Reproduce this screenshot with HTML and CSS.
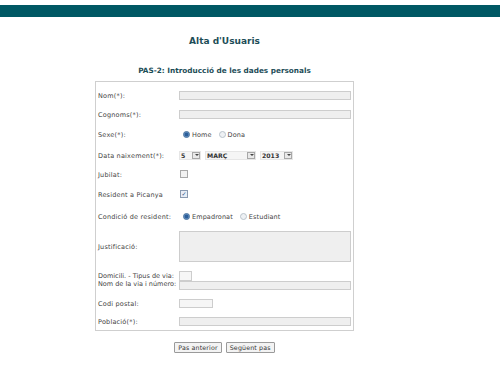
FILE: index.html
```html
<!DOCTYPE html>
<html lang="ca">
<head>
<meta charset="utf-8">
<title>Alta d'Usuaris</title>
<link rel="stylesheet" href="styles.css">
</head>
<body>
<div class="topbar"></div>
<div class="page">
  <h1 class="title">Alta d'Usuaris</h1>
  <h2 class="subtitle">PAS-2: Introducció de les dades personals</h2>
  <form class="box">
    <div class="row h18">
      <span class="label">Nom(*):</span>
      <span class="field"><span class="input full"></span></span>
    </div>
    <div class="row h20">
      <span class="label">Cognoms(*):</span>
      <span class="field"><span class="input full"></span></span>
    </div>
    <div class="row h20">
      <span class="label">Sexe(*):</span>
      <span class="field">
        <span class="radio checked"></span><span class="opt">Home</span>
        <span class="radio"></span><span class="opt">Dona</span>
      </span>
    </div>
    <div class="row h22">
      <span class="label">Data naixement(*):</span>
      <span class="field">
        <span class="select sel-day"><span class="sel-text">5</span><span class="arrow"></span></span>
        <span class="select sel-month"><span class="sel-text">MARÇ</span><span class="arrow"></span></span>
        <span class="select sel-year"><span class="sel-text">2013</span><span class="arrow"></span></span>
      </span>
    </div>
    <div class="row h16">
      <span class="label">Jubilat:</span>
      <span class="field"><span class="check"></span></span>
    </div>
    <div class="row h24">
      <span class="label">Resident a Picanya</span>
      <span class="field"><span class="check checked">✓</span></span>
    </div>
    <div class="row h20">
      <span class="label">Condició de resident:</span>
      <span class="field">
        <span class="radio checked"></span><span class="opt">Empadronat</span>
        <span class="radio"></span><span class="opt">Estudiant</span>
      </span>
    </div>
    <div class="row h40">
      <span class="label">Justificació:</span>
      <span class="field"><span class="input full textarea"></span></span>
    </div>
    <div class="row h28">
      <span class="label stacked"><span>Domicili. - Tipus de via:</span><span>Nom de la via i número:</span></span>
      <span class="field stack">
        <span class="input via"></span>
        <span class="input full"></span>
      </span>
    </div>
    <div class="row h18">
      <span class="label">Codi postal:</span>
      <span class="field"><span class="input cp"></span></span>
    </div>
    <div class="row h18">
      <span class="label">Població(*):</span>
      <span class="field"><span class="input full"></span></span>
    </div>
  </form>
  <div class="buttons">
    <button type="button" class="btn">Pas anterior</button>
    <button type="button" class="btn">Següent pas</button>
  </div>
</div>
</body>
</html>
```

FILE: styles.css
```css
html, body {
  margin: 0;
  padding: 0;
  background: #ffffff;
  font-family: "DejaVu Sans", Verdana, sans-serif;
}

.topbar {
  margin-top: 5px;
  height: 12px;
  background: #005864;
}

.page {
  width: 449px;
  display: flex;
  flex-direction: column;
  align-items: center;
}

.title {
  margin: 18px 0 0 0;
  font-size: 9px;
  line-height: 12px;
  font-weight: bold;
  color: #1d4d57;
}

.subtitle {
  margin: 19px 0 0 0;
  font-size: 7.3px;
  line-height: 10px;
  font-weight: bold;
  color: #1d4d57;
}

.box {
  margin: 5px 0 0 0;
  width: 259px;
  box-sizing: border-box;
  border: 1px solid #cfcfcf;
  padding: 4px 1px 0 2px;
  display: flex;
  flex-direction: column;
}

.row {
  display: flex;
  align-items: center;
}

.h16 { height: 16px; }
.h18 { height: 18px; }
.h20 { height: 20px; }
.h22 { height: 22px; }
.h24 { height: 24px; }
.h28 { height: 28px; }
.h40 { height: 40px; }

.label {
  width: 81px;
  flex: none;
  padding-top: 2px;
  font-size: 6.5px;
  line-height: 8px;
  letter-spacing: 0.2px;
  color: #444444;
  white-space: nowrap;
}

.label.stacked {
  display: flex;
  flex-direction: column;
  padding-top: 0;
  letter-spacing: 0;
}

.field {
  flex: 1;
  display: flex;
  align-items: center;
  font-size: 6.5px;
  color: #444444;
}

.field.stack {
  flex-direction: column;
  align-items: flex-start;
}

.input {
  display: block;
  box-sizing: border-box;
  height: 9px;
  background: #efefef;
  border: 1px solid #cdcdcd;
}

.input.full { width: 172px; }
.input.textarea { height: 31px; }
.input.via { width: 13px; height: 10px; background: #f6f6f6; }
.input.cp { width: 34px; height: 9px; background: #f6f6f6; }

.radio {
  width: 7px;
  height: 7px;
  box-sizing: border-box;
  border-radius: 50%;
  border: 1px solid #b9c3cc;
  background: #eef1f4;
  margin: 0 2px 0 4px;
  flex: none;
}

.radio.checked {
  border-color: #3d6a9a;
  background: radial-gradient(circle, #2c5f9a 0 1.6px, #6c95c4 2.3px, #c9d8ea 3.5px);
}

.opt {
  margin-right: 3px;
  line-height: 8px;
  padding-top: 1px;
  letter-spacing: 0.1px;
}

.select {
  display: flex;
  align-items: center;
  height: 9px;
  margin-right: 4px;
  font-weight: bold;
  font-size: 6.2px;
  color: #333;
  background: #f5f5f5;
  border: 1px solid #e6e6e6;
  box-sizing: border-box;
}

.sel-text {
  padding-left: 1px;
  line-height: 9px;
}

.sel-day .sel-text { width: 11px; }
.sel-month .sel-text { width: 40px; }
.sel-year .sel-text { width: 22px; }

.arrow {
  position: relative;
  width: 8px;
  height: 7px;
  box-sizing: border-box;
  border: 1px solid #a8a8a8;
  background: #e9e9e9;
}

.arrow::after {
  content: "";
  position: absolute;
  left: 1.5px;
  top: 1.5px;
  border-left: 2px solid transparent;
  border-right: 2px solid transparent;
  border-top: 2px solid #444;
}

.check {
  width: 8px;
  height: 8px;
  box-sizing: border-box;
  border: 1px solid #a9a9a9;
  background: #f2f2f2;
  margin-left: 1px;
  font-size: 6px;
  line-height: 6px;
  text-align: center;
  color: #2a4f8a;
}

.check.checked {
  border-color: #8a9ab0;
  background: #e8edf5;
}

.buttons {
  margin-top: 11px;
  display: flex;
  gap: 4px;
}

.btn {
  margin: 0;
  padding: 0 3px;
  height: 11px;
  font-family: "DejaVu Sans", Verdana, sans-serif;
  font-size: 6.3px;
  line-height: 9px;
  letter-spacing: 0.15px;
  color: #333;
  background: #f3f3f3;
  border: 1px solid #9a9a9a;
  border-radius: 1px;
}
```
